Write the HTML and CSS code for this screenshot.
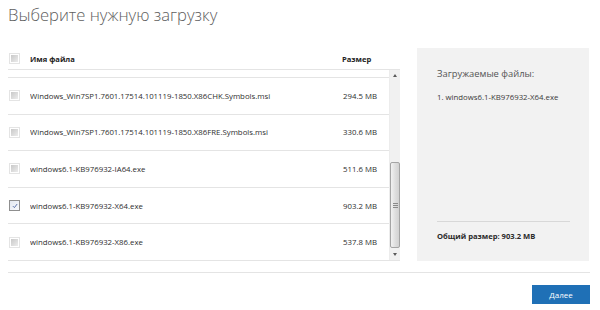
FILE: index.html
```html
<!DOCTYPE html>
<html lang="ru">
<head>
<meta charset="utf-8">
<title>Выберите нужную загрузку</title>
<link rel="stylesheet" href="styles.css">
</head>
<body>
<div class="page">
  <h1 class="title">Выберите нужную загрузку</h1>
  <div class="content">
    <div class="files">
      <div class="files-head">
        <span class="cb"></span>
        <span class="col-name">Имя файла</span>
        <span class="col-size">Размер</span>
      </div>
      <div class="list">
        <div class="rows">
          <div class="row">
            <span class="cb"></span>
            <span class="col-name">Windows_Win7SP1.7601.17514.101119-1850.X86CHK.Symbols.msi</span>
            <span class="col-size">294.5 MB</span>
          </div>
          <div class="row">
            <span class="cb"></span>
            <span class="col-name">Windows_Win7SP1.7601.17514.101119-1850.X86FRE.Symbols.msi</span>
            <span class="col-size">330.6 MB</span>
          </div>
          <div class="row">
            <span class="cb"></span>
            <span class="col-name">windows6.1-KB976932-IA64.exe</span>
            <span class="col-size">511.6 MB</span>
          </div>
          <div class="row">
            <span class="cb checked"><svg viewBox="0 0 7 7" width="6" height="6"><path d="M1 3.6 L2.8 5.4 L6 1.2" fill="none" stroke="#5770a8" stroke-width="1.1"/></svg></span>
            <span class="col-name">windows6.1-KB976932-X64.exe</span>
            <span class="col-size">903.2 MB</span>
          </div>
          <div class="row">
            <span class="cb"></span>
            <span class="col-name">windows6.1-KB976932-X86.exe</span>
            <span class="col-size">537.8 MB</span>
          </div>
        </div>
        <div class="scrollbar">
          <div class="sb-btn"><span class="arrow-up"></span></div>
          <div class="sb-track">
            <div class="sb-thumb" style="margin-top:81px"><span class="grip"></span></div>
          </div>
          <div class="sb-btn"><span class="arrow-down"></span></div>
        </div>
      </div>
    </div>
    <aside class="summary">
      <h2 class="summary-title">Загружаемые файлы:</h2>
      <ol class="summary-list">
        <li>1. windows6.1-KB976932-X64.exe</li>
      </ol>
      <div class="summary-total">Общий размер: 903.2 MB</div>
    </aside>
  </div>
  <div class="footer">
    <button class="next" type="button">Далее</button>
  </div>
</div>
</body>
</html>
```

FILE: styles.css
```css
html, body {
  margin: 0;
  padding: 0;
  background: #ffffff;
}

body {
  font-family: "Open Sans", "Noto Sans", "DejaVu Sans", sans-serif;
  color: #333;
}

.page {
  width: 582px;
  margin-left: 8px;
}

.title {
  margin: 0 0 21px;
  padding-top: 3px;
  font-size: 16.6px;
  line-height: 24px;
  font-weight: 300;
  color: #5e5e5e;
}

.content {
  display: flex;
  gap: 17px;
  height: 213px;
}

.files {
  width: 392px;
  display: flex;
  flex-direction: column;
}

.files-head {
  height: 21px;
  display: flex;
  align-items: center;
  font-size: 7.6px;
  font-weight: 700;
  color: #222;
}

.files-head .col-size {
  margin-right: 23px;
}

.cb {
  width: 11px;
  height: 11px;
  box-sizing: border-box;
  margin-left: 1px;
  margin-right: 10px;
  flex: none;
  border: 1px solid #e4e4e4;
  padding: 1px;
  background: #fff;
  display: flex;
  align-items: center;
  justify-content: center;
}

.cb::before {
  content: "";
  display: block;
  width: 7px;
  height: 7px;
  background: linear-gradient(135deg, #c9c9c9, #ececec);
}

.cb.checked {
  border-color: #8f8f8f;
  background: linear-gradient(135deg, #e3e8f1, #f8f9fc);
  padding: 0;
}

.cb.checked::before {
  display: none;
}

.col-name {
  flex: 1;
  white-space: nowrap;
  overflow: hidden;
}

.col-size {
  width: 35px;
  margin-right: 12px;
  flex: none;
  white-space: nowrap;
}

.row .col-size {
  text-align: right;
}

.list {
  display: flex;
  height: 190px;
  border-top: 1px solid #e4e4e4;
  border-bottom: 1px solid #e4e4e4;
}

.rows {
  flex: 1;
  padding-top: 7px;
  overflow: hidden;
}

.row {
  height: 36.6px;
  box-sizing: border-box;
  border-top: 1px solid #e4e4e4;
  display: flex;
  align-items: center;
  font-size: 7.8px;
  color: #2e2e2e;
}

.scrollbar {
  width: 11px;
  flex: none;
  display: flex;
  flex-direction: column;
  background: #f1f1f1;
  border-left: 1px solid #ececec;
  box-sizing: border-box;
}

.sb-btn {
  height: 11px;
  flex: none;
  display: flex;
  align-items: center;
  justify-content: center;
}

.arrow-up,
.arrow-down {
  width: 0;
  height: 0;
  border-left: 2.5px solid transparent;
  border-right: 2.5px solid transparent;
}

.arrow-up {
  border-bottom: 3px solid #5a5a5a;
}

.arrow-down {
  border-top: 3px solid #5a5a5a;
}

.sb-track {
  flex: 1;
  display: flex;
  flex-direction: column;
}

.sb-thumb {
  height: 86px;
  box-sizing: border-box;
  border: 1px solid #a4a4a4;
  border-radius: 2px;
  background: linear-gradient(90deg, #f1f1f1, #dcdcdc 60%, #d2d2d2);
  display: flex;
  align-items: center;
  justify-content: center;
}

.grip {
  width: 5px;
  height: 5px;
  background: repeating-linear-gradient(180deg, #8a8a8a 0 1px, transparent 1px 2px);
}

.summary {
  width: 172px;
  box-sizing: border-box;
  background: #f2f2f2;
  padding: 19px 19px 19px 20px;
  display: flex;
  flex-direction: column;
}

.summary-title {
  margin: 0;
  font-size: 9.4px;
  line-height: 14px;
  font-weight: 400;
  color: #555;
}

.summary-list {
  list-style: none;
  margin: 10px 0 0;
  padding: 0;
  font-size: 7.8px;
  line-height: 12px;
  color: #3a3a3a;
}

.summary-total {
  margin-top: auto;
  border-top: 1px solid #d8d8d8;
  padding-top: 8px;
  font-size: 7.6px;
  line-height: 12px;
  font-weight: 700;
  color: #2a2a2a;
}

.footer {
  margin-top: 11px;
  border-top: 1px solid #e4e4e4;
  padding-top: 12px;
  display: flex;
  justify-content: flex-end;
}

.next {
  width: 58px;
  height: 19px;
  border: 0;
  margin: 0;
  padding: 0;
  background: #1f70b6;
  color: #fff;
  font-family: "Open Sans", "Noto Sans", sans-serif;
  font-size: 8px;
  line-height: 19px;
}
```
